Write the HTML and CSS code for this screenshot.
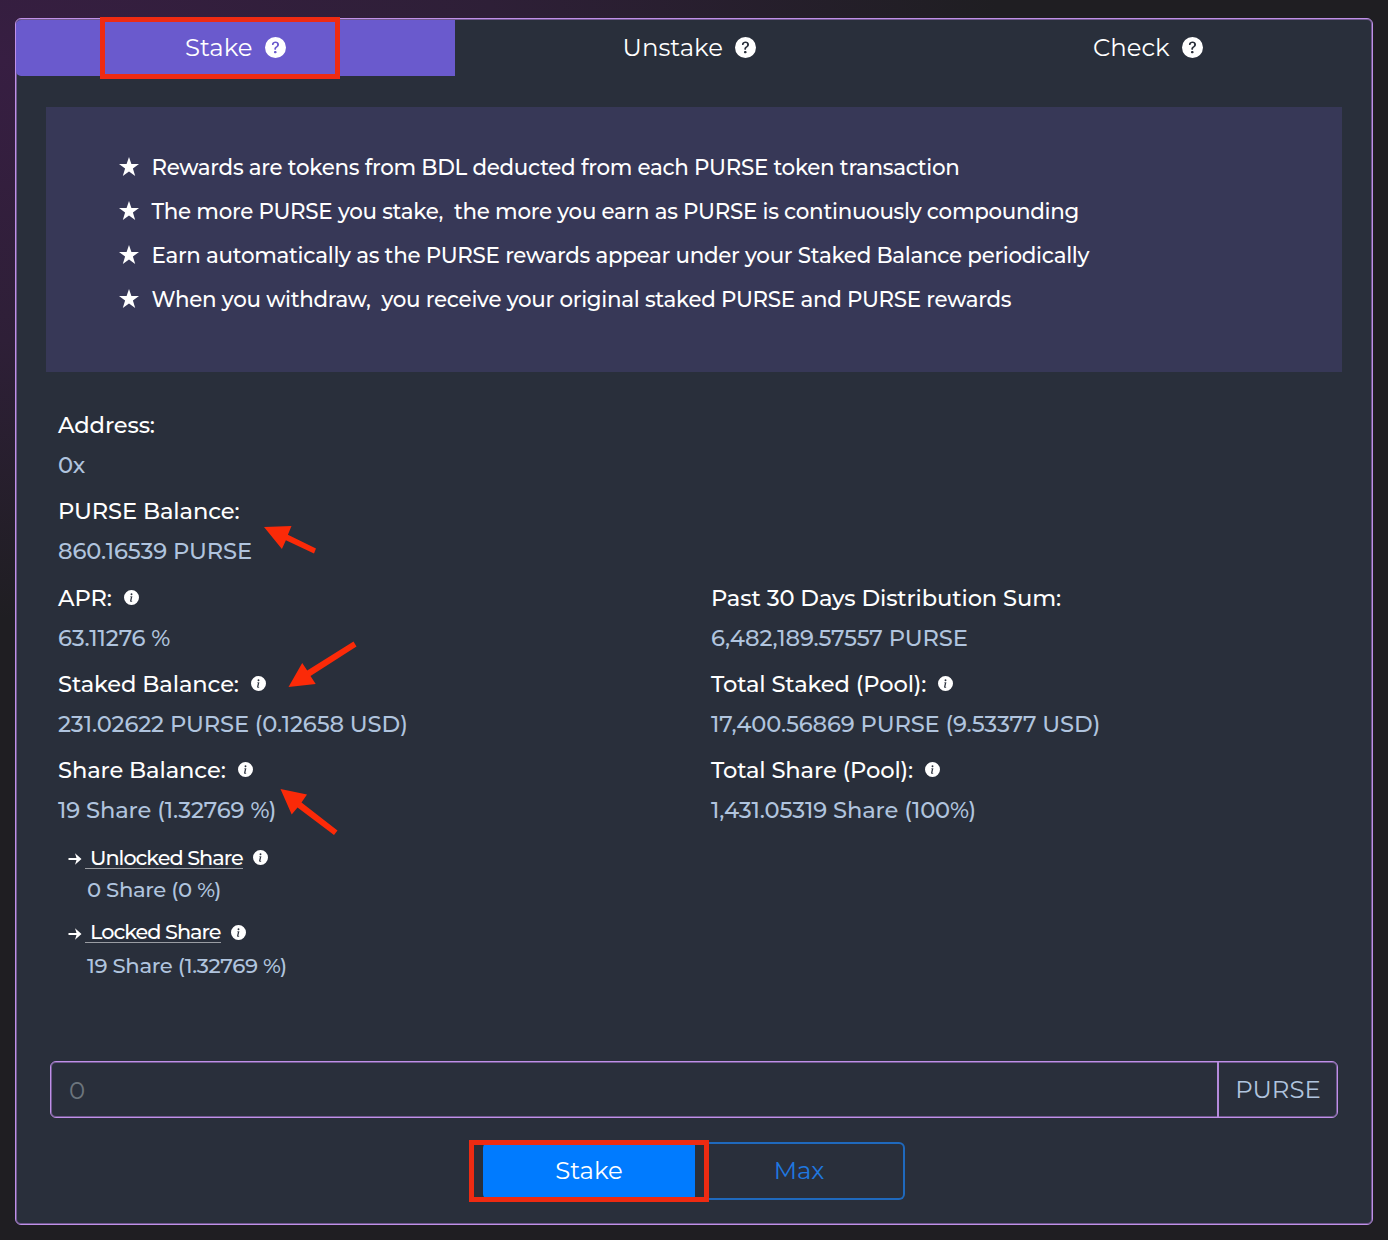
FILE: index.html
```
<!DOCTYPE html>
<html lang="en">
<head>
<meta charset="utf-8">
<title>PURSE Staking</title>
<link rel="stylesheet" href="styles.css">
</head>
<body>
<svg class="defs" width="0" height="0" aria-hidden="true">
  <symbol id="info" viewBox="0 0 16 16"><path fill-rule="evenodd" d="M8 16A8 8 0 1 0 8 0a8 8 0 0 0 0 16zm.93-9.412-1 4.705c-.07.34.029.533.304.533.194 0 .487-.07.686-.246l-.088.416c-.287.346-.92.598-1.465.598-.703 0-1.002-.422-.808-1.319l.738-3.468c.064-.293.006-.399-.287-.47l-.451-.081.082-.381 2.29-.287zM8 5.5a1 1 0 1 1 0-2 1 1 0 0 1 0 2z"/></symbol>
  <symbol id="help" viewBox="0 0 16 16"><path fill-rule="evenodd" d="M16 8A8 8 0 1 1 0 8a8 8 0 0 1 16 0zM5.496 6.033h.825c.138 0 .248-.113.266-.25.09-.656.54-1.134 1.342-1.134.686 0 1.314.343 1.314 1.168 0 .635-.374.927-.965 1.371-.673.489-1.206 1.06-1.168 1.987l.003.217a.25.25 0 0 0 .25.246h.811a.25.25 0 0 0 .25-.25v-.105c0-.718.273-.927 1.01-1.486.609-.463 1.244-.977 1.244-2.056 0-1.511-1.276-2.241-2.673-2.241-1.267 0-2.655.59-2.75 2.286a.237.237 0 0 0 .241.247zm2.325 6.443c.61 0 1.029-.394 1.029-.927 0-.552-.42-.94-1.029-.94-.584 0-1.009.388-1.009.94 0 .533.425.927 1.01.927z"/></symbol>
  <symbol id="star" viewBox="0 0 20 19"><path d="M10 0l2.400 7H20l-6.100 4.500L16.200 19 10 14.500 3.800 19l2.300-7.500L0 7h7.600z"/></symbol>
  <symbol id="arrow" viewBox="0 0 14 12"><path d="M0.500 5h8L7 0.200 13.500 6 7 11.800 8.500 7H0.500z"/></symbol>
</svg>

<main class="card">
  <nav class="tabs">
    <a class="tab active"><span>Stake</span><svg class="help"><use href="#help"/></svg></a>
    <a class="tab"><span>Unstake</span><svg class="help"><use href="#help"/></svg></a>
    <a class="tab"><span>Check</span><svg class="help"><use href="#help"/></svg></a>
  </nav>

  <ul class="notes">
    <li><svg class="star"><use href="#star"/></svg>Rewards are tokens from BDL deducted from each PURSE token transaction</li>
    <li><svg class="star"><use href="#star"/></svg>The more PURSE you stake,&nbsp; the more you earn as PURSE is continuously compounding</li>
    <li><svg class="star"><use href="#star"/></svg>Earn automatically as the PURSE rewards appear under your Staked Balance periodically</li>
    <li><svg class="star"><use href="#star"/></svg>When you withdraw,&nbsp; you receive your original staked PURSE and PURSE rewards</li>
  </ul>

  <section class="details">
    <dl class="column">
      <div><dt>Address:</dt><dd>0x</dd></div>
      <div><dt>PURSE Balance:</dt><dd>860.16539 PURSE</dd></div>
      <div><dt>APR:<svg class="info"><use href="#info"/></svg></dt><dd>63.11276 %</dd></div>
      <div><dt>Staked Balance:<svg class="info"><use href="#info"/></svg></dt><dd>231.02622 PURSE (0.12658 USD)</dd></div>
      <div><dt>Share Balance:<svg class="info"><use href="#info"/></svg></dt><dd>19 Share (1.32769 %)</dd></div>
      <div class="sub"><dt><svg class="arrow"><use href="#arrow"/></svg><span class="link">Unlocked Share</span><svg class="info"><use href="#info"/></svg></dt><dd>0 Share (0 %)</dd></div>
      <div class="sub"><dt><svg class="arrow"><use href="#arrow"/></svg><span class="link">Locked Share</span><svg class="info"><use href="#info"/></svg></dt><dd>19 Share (1.32769 %)</dd></div>
    </dl>
    <dl class="column pool">
      <div><dt>Past 30 Days Distribution Sum:</dt><dd>6,482,189.57557 PURSE</dd></div>
      <div><dt>Total Staked (Pool):<svg class="info"><use href="#info"/></svg></dt><dd>17,400.56869 PURSE (9.53377 USD)</dd></div>
      <div><dt>Total Share (Pool):<svg class="info"><use href="#info"/></svg></dt><dd>1,431.05319 Share (100%)</dd></div>
    </dl>
  </section>

  <div class="amount">
    <div class="value">0</div>
    <div class="unit">PURSE</div>
  </div>

  <div class="actions">
    <div class="btn primary">Stake</div>
    <div class="btn outline">Max</div>
  </div>
</main>

<div class="mark mark-tab"></div>
<div class="mark mark-button"></div>
<svg class="pointers" viewBox="0 0 1388 1240">
  <path d="M264 527l27.500-1-3.600 8.800L316 548.500l-2 5-28.100-13.200-4 8.700z"/>
  <path d="M288.500 687l13.700-24 5 7.600L353.500 641.500l3 5-46 29.500 5.200 8z"/>
  <path d="M280.500 789l26.500 5.500-5.500 8L337.500 830.500l-3.500 4.500-36.500-27.500-5.800 7z"/>
</svg>
</body>
</html>
```
FILE: styles.css
```
* { box-sizing: border-box; }

body {
  margin: 0;
  height: 1240px;
  padding: 18px 15px 15px;
  overflow: hidden;
  background: radial-gradient(ellipse 1000px 560px at 0 60px, #371e42 0%, #2e1f37 50%, #1f1e22 100%) #1f1e22;
  font-family: Montserrat, Inter, sans-serif;
  font-weight: 500;
  color: #fff;
}

svg { fill: currentColor; flex: none; }
.defs { position: absolute; }

.card {
  display: flex;
  flex-direction: column;
  width: 1358px;
  height: 1207px;
  border: 1px solid #c090e8;
  border-radius: 6px;
  background: #292f3b;
  box-shadow: inset 0 0 0 1px #70598f;
}

.tabs {
  display: grid;
  grid-template-columns: 439px 470px 1fr;
  height: 57px;
}
.tab {
  display: flex;
  align-items: center;
  justify-content: center;
  gap: 12.5px;
  padding-right: 1px;
  font-size: 24.4px;
  font-weight: 400;
}
.tab span { padding-bottom: 2px; }
.active {
  margin-top: 1px;
  padding-right: 0;
  background: #6a5acd;
  border-radius: 5px 0 0 5px;
}
.active .help, .active span { margin-top: -1px; }
.help { width: 21px; height: 21px; }

.notes {
  list-style: none;
  height: 265px;
  margin: 31px 30px 0;
  padding: 38px 73px 0;
  background: #373857;
  font-size: 21.4px;
  letter-spacing: -0.285px;
}
.notes li {
  display: flex;
  align-items: center;
  gap: 12.5px;
  height: 44px;
  white-space: nowrap;
}
.star { width: 20px; height: 19px; margin-top: -1px; }

.details {
  display: grid;
  grid-template-columns: 653px 1fr;
  height: 656px;
  padding: 33px 42px 0;
  font-size: 22.6px;
  line-height: 40px;
  letter-spacing: -0.12px;
}
.column {
  display: flex;
  flex-direction: column;
  gap: 6.3px;
  margin: 0;
}
.pool { padding-top: 172.6px; }
dt { display: flex; align-items: center; }
dd { margin: 0; color: #b0c4de; white-space: nowrap; }
.info { width: 15px; height: 15px; margin: -1px 0 0 12px; }

.sub {
  margin: 6px 0 0 10px;
  font-size: 21.2px;
  line-height: 32px;
  letter-spacing: -0.36px;
}
.sub + .sub { margin-top: 5px; }
.sub dt { height: 32px; }
.sub dd { margin-top: -1px; padding-left: 19px; }
.sub + .sub dd { margin-top: 0; }
.sub .info { margin-left: 10.5px; }
.arrow { width: 14px; height: 12px; margin: 2px 3px 0 0; }
.link {
  padding-left: 5px;
  border-bottom: 1px solid #9a9da3;
  font-size: 20.8px;
  line-height: 20px;
  letter-spacing: -1px;
}

.amount {
  display: flex;
  height: 57px;
  margin: 33px 34px 0;
  border: 1px solid #c090e8;
  border-radius: 6px;
  box-shadow: inset 0 0 0 1px #70598f;
  font-size: 24.4px;
  font-weight: 400;
  line-height: 56px;
}
.value { flex: 1; padding-left: 18px; color: #6c757d; }
.unit {
  width: 120px;
  border-left: 2px solid #b48adb;
  color: #b0c4de;
  line-height: 54px;
  text-align: center;
}

.actions {
  display: flex;
  justify-content: center;
  margin-top: 24px;
}
.btn {
  height: 58px;
  font-size: 24.4px;
  font-weight: 400;
  line-height: 56px;
  text-align: center;
}
.primary {
  width: 212px;
  border-radius: 6px 0 0 6px;
  background: #007bff;
}
.outline {
  width: 210px;
  border: 2px solid #1f69bd;
  border-left: 0;
  border-radius: 0 6px 6px 0;
  color: #1f78e0;
  line-height: 52px;
}

/* Tutorial highlights laid over the page */
.mark { position: absolute; width: 240px; height: 62px; border: 5px solid #ee2b12; }
.mark-tab { left: 100px; top: 17px; }
.mark-button { left: 469px; top: 1140px; }
.pointers { position: absolute; left: 0; top: 0; width: 1388px; height: 1240px; fill: #fb2a08; }
```
